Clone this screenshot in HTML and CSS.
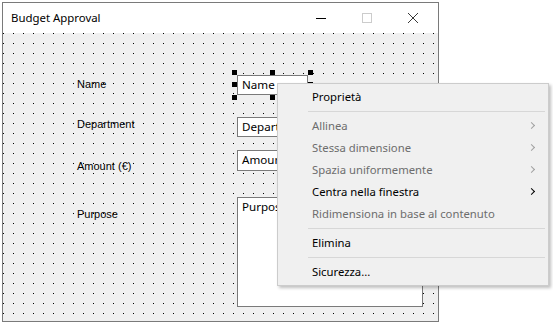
FILE: index.html
```html
<!DOCTYPE html>
<html>
<head>
<meta charset="utf-8">
<link rel="stylesheet" href="styles.css">
</head>
<body>
<div class="window">
  <div class="titlebar">
    <span class="title">Budget Approval</span>
    <div class="caption-buttons">
      <div class="cbtn"><svg width="10" height="10" viewBox="0 0 10 10"><path d="M0 5.5H10" stroke="#000" stroke-width="1"/></svg></div>
      <div class="cbtn"><svg width="10" height="10" viewBox="0 0 10 10"><rect x="0.5" y="0.5" width="9" height="9" fill="none" stroke="#cccccc" stroke-width="1"/></svg></div>
      <div class="cbtn"><svg width="10" height="10" viewBox="0 0 10 10"><path d="M0 0L10 10M10 0L0 10" stroke="#222" stroke-width="0.9"/></svg></div>
    </div>
  </div>
  <div class="client">
    <span class="lbl lbl-name">Name</span>
    <div class="tb tb-name">Name</div>
    <span class="handle h-tl"></span>
    <span class="handle h-tm"></span>
    <span class="handle h-tr"></span>
    <span class="handle h-ml"></span>
    <span class="handle h-mr"></span>
    <span class="handle h-bl"></span>
    <span class="handle h-bm"></span>
    <span class="handle h-br"></span>

    <span class="lbl lbl-dept">Department</span>
    <div class="tb tb-dept">Department</div>

    <span class="lbl lbl-amount">Amount (€)</span>
    <div class="tb tb-amount">Amount</div>

    <span class="lbl lbl-purpose">Purpose</span>
    <div class="tb tb-purpose">Purpose</div>
  </div>
</div>

<div class="menu">
  <div class="item">Proprietà</div>
  <div class="sep"></div>
  <div class="item disabled sub">Allinea</div>
  <div class="item disabled sub">Stessa dimensione</div>
  <div class="item disabled sub">Spazia uniformemente</div>
  <div class="item sub">Centra nella finestra</div>
  <div class="item disabled">Ridimensiona in base al contenuto</div>
  <div class="sep"></div>
  <div class="item">Elimina</div>
  <div class="sep"></div>
  <div class="item">Sicurezza...</div>
</div>
</body>
</html>
```
FILE: styles.css
```css
html, body {
  margin: 0;
  padding: 0;
  background: #ffffff;
}
body {
  position: relative;
  width: 553px;
  height: 325px;
  overflow: hidden;
  font-family: "Noto Sans", "Open Sans", sans-serif;
}
.window {
  position: absolute;
  left: 2px;
  top: 2px;
  width: 435px;
  height: 318px;
  border: 1px solid #7a7a7a;
  display: flex;
  flex-direction: column;
}
.titlebar {
  height: 30px;
  background: #ffffff;
  display: flex;
  align-items: center;
  justify-content: space-between;
}
.title {
  padding-left: 8px;
  font-size: 11.4px;
  color: #000;
  line-height: 16px;
}
.caption-buttons {
  display: flex;
  height: 30px;
  margin-right: 2px;
}
.cbtn {
  width: 46px;
  height: 30px;
  display: flex;
  align-items: center;
  justify-content: center;
}
.cbtn svg { display: block; }
.client {
  position: relative;
  flex: 1;
  background-color: #f0f0f0;
  background-image: conic-gradient(at 1px 1px, #f0f0f0 75%, #000000 0);
  background-size: 10px 10px;
  background-position: 0 0;
}
.lbl {
  position: absolute;
  left: 74px;
  font-family: "Liberation Sans", Arial, sans-serif;
  font-size: 11px;
  line-height: 14px;
  color: #000;
}
.lbl-name { top: 44px; }
.lbl-dept { top: 84px; }
.lbl-amount { top: 126px; }
.lbl-purpose { top: 174px; }

.tb {
  position: absolute;
  left: 234px;
  box-sizing: border-box;
  background: #fff;
  border: 1px solid #7a7a7a;
  font-size: 11.6px;
  line-height: 16px;
  padding: 1px 4px;
  color: #000;
  width: 186px;
  height: 20px;
  overflow: hidden;
  white-space: nowrap;
}
.tb-name { top: 42px; width: 71px; }
.tb-dept { top: 84px; }
.tb-amount { top: 117px; height: 21px; }
.tb-purpose { top: 164px; height: 110px; }

.handle {
  position: absolute;
  width: 5px;
  height: 5px;
  background: #000;
}
.h-tl { left: 229px; top: 37px; }
.h-tm { left: 267px; top: 37px; }
.h-tr { left: 305px; top: 37px; }
.h-ml { left: 229px; top: 49px; }
.h-mr { left: 305px; top: 49px; }
.h-bl { left: 229px; top: 62px; }
.h-bm { left: 267px; top: 62px; }
.h-br { left: 305px; top: 62px; }

.menu {
  position: absolute;
  left: 277px;
  top: 83px;
  width: 270px;
  box-sizing: content-box;
  background: #f0f0f0;
  border: 1px solid #cccccc;
  padding: 2px 0;
  box-shadow: 2px 2px 3px rgba(0, 0, 0, 0.25);
  font-size: 11.3px;
  color: #000;
}
.item {
  position: relative;
  height: 22px;
  line-height: 22px;
  padding-left: 34px;
  white-space: nowrap;
}
.item.disabled { color: #6d6d6d; }
.item.sub::after {
  content: "";
  position: absolute;
  right: 14px;
  top: 8px;
  width: 4px;
  height: 4px;
  border-right: 1px solid #000;
  border-top: 1px solid #000;
  transform: rotate(45deg);
}
.item.disabled.sub::after {
  border-color: #a0a0a0;
}
.sep {
  height: 7px;
  position: relative;
}
.sep::before {
  content: "";
  position: absolute;
  left: 30px;
  right: 3px;
  top: 3px;
  height: 1px;
  background: #d7d7d7;
}
```
